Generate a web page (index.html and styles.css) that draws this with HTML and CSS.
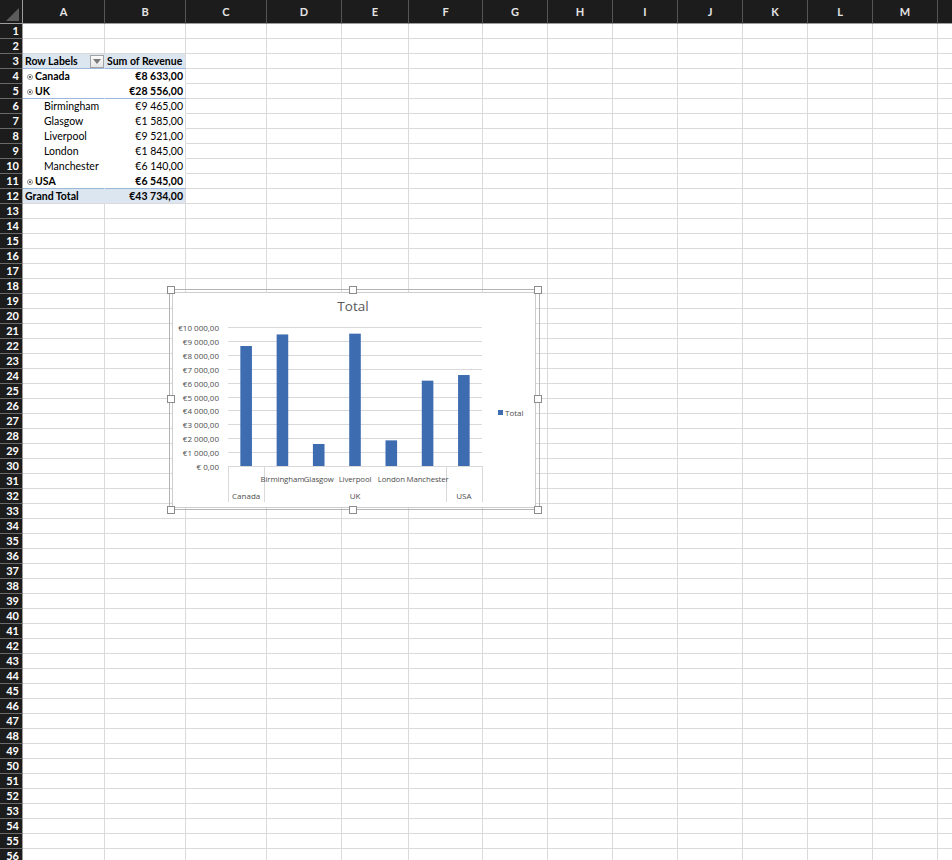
FILE: index.html
```html
<!DOCTYPE html>
<html>
<head>
    <meta charset="utf-8">
    <title>Revenue by City</title>
    <link rel="stylesheet" href="styles.css">
</head>
<body>
    <div class="sheet">
        <table class="grid">
            <colgroup>
                <col class="col-rn">
                <col class="col-a">
                <col class="col-b">
                <col class="col-c">
                <col class="col-d">
                <col class="col-e">
                <col class="col-f">
                <col class="col-g">
                <col class="col-std">
                <col class="col-std">
                <col class="col-std">
                <col class="col-std">
                <col class="col-std">
                <col class="col-std">
                <col class="col-std">
            </colgroup>
            <thead>
                <tr>
                    <th class="corner"><span class="select-all"></span></th>
                    <th>A</th>
                    <th>B</th>
                    <th>C</th>
                    <th>D</th>
                    <th>E</th>
                    <th>F</th>
                    <th>G</th>
                    <th>H</th>
                    <th>I</th>
                    <th>J</th>
                    <th>K</th>
                    <th>L</th>
                    <th>M</th>
                    <th></th>
                </tr>
            </thead>
            <tbody id="rows"></tbody>
        </table>

        <div class="chart-frame">
            <div class="chart">
                <svg id="chart" width="362" height="214" viewBox="0 0 362 214"></svg>
            </div>
            <span class="handle h-nw"></span>
            <span class="handle h-n"></span>
            <span class="handle h-ne"></span>
            <span class="handle h-w"></span>
            <span class="handle h-e"></span>
            <span class="handle h-sw"></span>
            <span class="handle h-s"></span>
            <span class="handle h-se"></span>
        </div>
    </div>

    <script src="script.js"></script>
</body>
</html>
```

FILE: styles.css
```css
body {
  margin: 0;
  overflow: hidden;
  background: #fff;
  font-family: Lato, "Liberation Sans", sans-serif;
  font-size: 10.5px;
  color: #000;
}

.sheet {
  position: relative;
}

.grid {
  border-collapse: separate;
  border-spacing: 0;
  table-layout: fixed;
  width: 1003px;
}

.col-rn { width: 23px; }
.col-a { width: 82px; }
.col-b { width: 81px; }
.col-c { width: 81px; }
.col-d { width: 75px; }
.col-e { width: 67px; }
.col-f { width: 74px; }
.col-g { width: 65px; }
.col-std { width: 65px; }

/* column letters */
.grid thead tr {
  height: 24px;
}

.grid thead th {
  padding: 0;
  background: #1c1c1c;
  color: #e4e4e4;
  font-size: 11px;
  font-weight: bold;
  text-align: center;
  border-right: 1px solid #555;
  border-bottom: 1px solid #9d9d9d;
}

.grid thead th.corner {
  border-right-color: #9d9d9d;
  vertical-align: bottom;
  padding-bottom: 2px;
}

.select-all {
  display: block;
  width: 0;
  height: 0;
  margin: 0 3px 0 auto;
  border-left: 13px solid transparent;
  border-bottom: 13px solid #5c5c5c;
}

/* rows */
.grid tbody tr {
  height: 15px;
}

.grid th.rn {
  padding: 0 3px 0 0;
  background: #1c1c1c;
  color: #fff;
  font-size: 11px;
  font-weight: bold;
  text-align: right;
  line-height: 14px;
  border-right: 1px solid #9d9d9d;
  border-bottom: 1px solid #6a6a6a;
}

.grid td {
  padding: 0 2px;
  line-height: 14px;
  white-space: nowrap;
  overflow: hidden;
  border-right: 1px solid #dadada;
  border-bottom: 1px solid #dadada;
}

/* pivot table */
.pv {
  border-bottom-color: transparent !important;
}

.pv-label {
  border-right-color: transparent !important;
}

.pv-value {
  text-align: right;
  padding-right: 2px !important;
}

.pv-head,
.pv-total {
  background: #dce6f1;
  font-weight: bold;
}

.pv-head.pv-value {
  text-align: left;
  padding-left: 2px;
}

.pv-group {
  font-weight: bold;
}

.pv-group.pv-label {
  padding-left: 4px;
}

.pv-item.pv-label {
  padding-left: 21px;
}

.pv-line {
  border-bottom-color: #9bb7da !important;
}

.pv-total {
  border-bottom-color: #dadada !important;
}

.head-cell {
  display: flex;
  align-items: center;
  justify-content: space-between;
  margin-right: -2px;
}

.filter {
  display: flex;
  align-items: center;
  justify-content: center;
  width: 14px;
  height: 13px;
  box-sizing: border-box;
  border: 1px solid #a3a3a3;
  background: linear-gradient(#fbfbfb, #e6e6e6);
}

.filter::after {
  content: "";
  width: 0;
  height: 0;
  border-left: 4px solid transparent;
  border-right: 4px solid transparent;
  border-top: 5px solid #7a7a7a;
}

.toggle {
  display: inline-block;
  position: relative;
  width: 4px;
  height: 4px;
  margin: 0 2px 1px 0;
  border: 1px solid #8d8d8d;
  border-radius: 50%;
  vertical-align: middle;
}

.toggle::after {
  content: "";
  position: absolute;
  left: 1px;
  top: 1px;
  width: 2px;
  height: 2px;
  background: #666;
}

/* chart object, selected */
.chart-frame {
  position: absolute;
  left: 169px;
  top: 289px;
  width: 371px;
  height: 221px;
  box-sizing: border-box;
  border: 1px solid #b4b4b4;
  padding: 2px 3px 1px 2px;
}

.chart {
  width: 100%;
  height: 100%;
  box-sizing: border-box;
  border: 1px solid #cdcdcd;
  background: #fff;
}

.chart svg {
  display: block;
  font-family: "Open Sans", "Liberation Sans", sans-serif;
}

.chart .title {
  font-size: 13.5px;
  fill: #595959;
}

.chart .axis-label {
  font-size: 8px;
  fill: #4d4d4d;
}

.chart .axis-label.city {
  font-size: 7.8px;
  letter-spacing: -0.1px;
}

.chart .gridline {
  stroke: #d9d9d9;
  stroke-width: 1;
}

.chart .tick {
  stroke: #d9d9d9;
  stroke-width: 1;
}

.chart .bar {
  fill: #3d6db0;
}

.handle {
  position: absolute;
  width: 8px;
  height: 8px;
  box-sizing: border-box;
  border: 1px solid #8c8c8c;
  background: #fff;
  transform: translate(-50%, -50%);
}

.h-nw { left: 1px; top: 0; }
.h-n { left: 183px; top: 0; }
.h-ne { left: 368px; top: 0; }
.h-w { left: 1px; top: 109px; }
.h-e { left: 368px; top: 109px; }
.h-sw { left: 1px; top: 220px; }
.h-s { left: 183px; top: 220px; }
.h-se { left: 368px; top: 220px; }
```

FILE: script.js
```js
// Sheet body: row numbers, empty cells and the pivot table in A3:B12
const ROW_COUNT = 56;
const COL_COUNT = 14;

const pivot = {
  3:  { type: 'head', label: 'Row Labels', value: 'Sum of Revenue', line: true },
  4:  { type: 'group', label: 'Canada', value: '€8 633,00' },
  5:  { type: 'group', label: 'UK', value: '€28 556,00', line: true },
  6:  { type: 'item', label: 'Birmingham', value: '€9 465,00' },
  7:  { type: 'item', label: 'Glasgow', value: '€1 585,00' },
  8:  { type: 'item', label: 'Liverpool', value: '€9 521,00' },
  9:  { type: 'item', label: 'London', value: '€1 845,00' },
  10: { type: 'item', label: 'Manchester', value: '€6 140,00' },
  11: { type: 'group', label: 'USA', value: '€6 545,00', line: true },
  12: { type: 'total', label: 'Grand Total', value: '€43 734,00' }
};

const body = document.getElementById('rows');

for (let r = 1; r <= ROW_COUNT; r++) {
  const tr = document.createElement('tr');
  const th = document.createElement('th');
  th.className = 'rn';
  th.textContent = r;
  tr.appendChild(th);

  const p = pivot[r];
  for (let c = 0; c < COL_COUNT; c++) {
    const td = document.createElement('td');
    if (p && c < 2) {
      td.className = 'pv pv-' + p.type + (c === 0 ? ' pv-label' : ' pv-value');
      if (p.line) td.className += ' pv-line';

      if (c === 1) {
        td.textContent = p.value;
      } else if (p.type === 'head') {
        td.innerHTML = '<div class="head-cell"><span>' + p.label + '</span><span class="filter"></span></div>';
      } else if (p.type === 'group') {
        td.innerHTML = '<span class="toggle"></span>' + p.label;
      } else {
        td.textContent = p.label;
      }
    }
    tr.appendChild(td);
  }
  body.appendChild(tr);
}

// Column chart of the pivot
const SVG_NS = 'http://www.w3.org/2000/svg';

function el(parent, name, attrs, text) {
  const node = document.createElementNS(SVG_NS, name);
  for (const k in attrs) node.setAttribute(k, attrs[k]);
  if (text) node.textContent = text;
  parent.appendChild(node);
  return node;
}

const bars = [
  { city: '', value: 8633 },
  { city: 'Birmingham', value: 9465 },
  { city: 'Glasgow', value: 1585 },
  { city: 'Liverpool', value: 9521 },
  { city: 'London', value: 1845 },
  { city: 'Manchester', value: 6140 },
  { city: '', value: 6545 }
];

const regions = [
  { name: 'Canada', from: 0, to: 1 },
  { name: 'UK', from: 1, to: 6 },
  { name: 'USA', from: 6, to: 7 }
];

const plot = { left: 55, right: 309, top: 34, bottom: 173, max: 10000, step: 1000 };
const svg = document.getElementById('chart');
const catWidth = (plot.right - plot.left) / bars.length;
const yOf = v => plot.bottom - v / plot.max * (plot.bottom - plot.top);

el(svg, 'text', { class: 'title', x: 180, y: 18, 'text-anchor': 'middle' }, 'Total');

for (let v = 0; v <= plot.max; v += plot.step) {
  const y = Math.round(yOf(v)) + 0.5;
  el(svg, 'line', { class: 'gridline', x1: plot.left, x2: plot.right, y1: y, y2: y });
  const label = v === 0 ? '€ 0,00' : '€' + (v / 1000) + ' 000,00';
  el(svg, 'text', { class: 'axis-label', x: 46, y: y + 3, 'text-anchor': 'end' }, label);
}

// two-level category axis, dividers first so labels sit on top
const ticks = [0, 1, 6, 7];
ticks.forEach(i => {
  const x = Math.round(plot.left + catWidth * i) + 0.5;
  el(svg, 'line', { class: 'tick', x1: x, x2: x, y1: plot.bottom, y2: 209 });
});

bars.forEach((b, i) => {
  const cx = plot.left + catWidth * (i + 0.5);
  const top = yOf(b.value);
  el(svg, 'rect', { class: 'bar', x: cx - 5.8, y: top, width: 11.6, height: plot.bottom - top });
  if (b.city) {
    el(svg, 'text', { class: 'axis-label city', x: cx, y: 189, 'text-anchor': 'middle' }, b.city);
  }
});

regions.forEach(g => {
  const cx = plot.left + catWidth * (g.from + g.to) / 2;
  el(svg, 'text', { class: 'axis-label', x: cx, y: 206, 'text-anchor': 'middle' }, g.name);
});

// legend
el(svg, 'rect', { class: 'bar', x: 325, y: 117, width: 5, height: 5 });
el(svg, 'text', { class: 'axis-label', x: 332, y: 122.5 }, 'Total');
```
